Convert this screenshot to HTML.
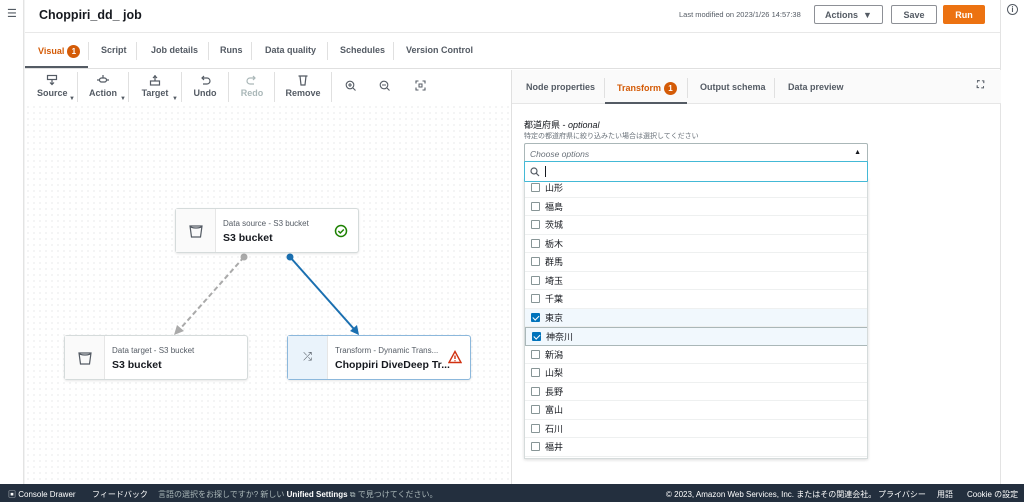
<!DOCTYPE html>
<html><head><meta charset="utf-8"><style>
*{box-sizing:border-box;margin:0;padding:0}
body{width:1024px;height:502px;overflow:hidden;position:relative;font-family:"Liberation Sans","Noto Sans CJK JP",sans-serif;background:#f2f3f3;color:#16191f}
.abs{position:absolute}
.lside{left:0;top:0;width:24px;height:484px;background:#fff;border-right:1px solid #e3e3e3}
.rside{left:1000px;top:0;width:24px;height:484px;background:#fff;border-left:1px solid #e3e3e3}
.main{left:25px;top:0;width:975px;height:484px;background:#fff}
.btn{position:absolute;top:5px;height:19px;border:1px solid #8d9096;border-radius:2px;font-size:9px;font-weight:bold;display:flex;align-items:center;justify-content:center;color:#545b64;background:#fff}
.tab{position:absolute;top:45px;font-size:9px;font-weight:bold;color:#545b64}
.sep{position:absolute;width:1px;background:#e0e0e0}
.badge{display:inline-block;width:13px;height:13px;border-radius:7px;background:#d45b07;color:#fff;font-size:8px;text-align:center;line-height:13px;vertical-align:middle;margin-left:3px}
.tool{position:absolute;top:74px;font-size:9px;font-weight:bold;color:#545b64;text-align:center}
.tool svg{display:block;margin:0 auto 2px}
.canvas{left:25px;top:104px;width:486px;height:380px;background-color:#fff;background-image:radial-gradient(#d9dcde 0.7px,transparent 0.8px);background-size:6px 6px}
.node{position:absolute;width:184px;height:45px;background:#fff;border:1px solid #d5dbdb;border-radius:3px;box-shadow:0 1px 2px rgba(0,0,0,.1)}
.node .ib{position:absolute;left:0;top:0;width:40px;height:43px;border-right:1px solid #e6e6e6;background:#fafafa;display:flex;align-items:center;justify-content:center}
.node .t1{position:absolute;left:47px;top:10px;font-size:8px;color:#545b64;white-space:nowrap}
.node .t2{position:absolute;left:47px;top:23px;font-size:10.5px;font-weight:bold;white-space:nowrap}
.rp{left:511px;top:70px;width:489px;height:414px;background:#fff;border-left:1px solid #e0e0e0}
.rtabs{position:absolute;left:0;top:0;width:489px;height:34px;background:#fafafa;border-bottom:1px solid #e6e6e6}
.rt{position:absolute;top:12px;font-size:9px;font-weight:bold;color:#545b64}
.row{position:absolute;left:0;width:344px;height:18.5px;border-bottom:1px solid #eef0f0;font-size:9px;color:#16191f}
.row .cb{position:absolute;left:6px;top:4px;width:9px;height:9px;border:1px solid #879596;border-radius:1px;background:#fff}
.row .cb.on{background:#0073bb;border-color:#0073bb}
.row .cb.on:after{content:"";position:absolute;left:2px;top:0px;width:2.5px;height:5px;border:solid #fff;border-width:0 1.3px 1.3px 0;transform:rotate(45deg)}
.row span{position:absolute;left:20px;top:2px}
.foot{left:0;top:484px;width:1024px;height:18px;background:#232f3e;color:#fff;font-size:8px}
.foot span{position:absolute;top:5px;white-space:nowrap}
</style></head><body>
<div class="abs lside"><div style="position:absolute;left:7px;top:7px;width:10px;font-size:11px;color:#545b64">☰</div></div>
<div class="abs rside"><div style="position:absolute;left:6px;top:4px;width:11px;height:11px;border:1px solid #545b64;border-radius:6px;font-size:8px;text-align:center;line-height:9px;color:#545b64;font-weight:bold">i</div></div>
<div class="abs main">
  <div style="position:absolute;left:14px;top:8px;font-size:12.5px;font-weight:bold">Choppiri_dd_ job</div>
  <div style="position:absolute;left:654px;top:10px;font-size:7.5px;color:#545b64">Last modified on 2023/1/26 14:57:38</div>
  <div class="btn" style="left:789px;width:69px">Actions&nbsp;&nbsp;▼</div>
  <div class="btn" style="left:866px;width:46px">Save</div>
  <div class="btn" style="left:918px;width:42px;background:#ec7211;border-color:#ec7211;color:#fff">Run</div>
  <div style="position:absolute;left:0;top:32px;width:975px;height:1px;background:#e8e8e8"></div>
  <div class="tab" style="left:13px;color:#d45b07">Visual<span class="badge">1</span></div>
  <div style="position:absolute;left:0;top:66px;width:63px;height:2px;background:#545b64"></div>
  <div class="sep" style="left:63px;top:42px;height:18px"></div>
  <div class="tab" style="left:76px">Script</div>
  <div class="sep" style="left:111px;top:42px;height:18px"></div>
  <div class="tab" style="left:126px">Job details</div>
  <div class="sep" style="left:183px;top:42px;height:18px"></div>
  <div class="tab" style="left:195px">Runs</div>
  <div class="sep" style="left:226px;top:42px;height:18px"></div>
  <div class="tab" style="left:240px">Data quality</div>
  <div class="sep" style="left:302px;top:42px;height:18px"></div>
  <div class="tab" style="left:315px">Schedules</div>
  <div class="sep" style="left:368px;top:42px;height:18px"></div>
  <div class="tab" style="left:381px">Version Control</div>
  <div style="position:absolute;left:0;top:68px;width:975px;height:1px;background:#e0e0e0"></div>
  <div class="tool" style="left:12px;width:30px"><svg width="12" height="12"><rect x="1.5" y="1.5" width="9" height="4" fill="none" stroke="#545b64" stroke-width="1.2"/><path d="M6 5.5v5M4 8.5l2 2 2-2" fill="none" stroke="#545b64" stroke-width="1.2"/></svg>Source<span style="font-size:6px;position:absolute;top:22px;left:32px">▼</span></div>
  <div class="sep" style="left:52px;top:72px;height:30px"></div>
  <div class="tool" style="left:63px;width:30px"><svg width="12" height="12"><rect x="2.5" y="4" width="7" height="4" rx="2" fill="none" stroke="#545b64" stroke-width="1.2"/><path d="M0 6h2.5M9.5 6H12M6 1v3" stroke="#545b64" stroke-width="1.2"/></svg>Action<span style="font-size:6px;position:absolute;top:22px;left:32px">▼</span></div>
  <div class="sep" style="left:103px;top:72px;height:30px"></div>
  <div class="tool" style="left:115px;width:30px"><svg width="12" height="12"><rect x="1.5" y="7" width="9" height="4" fill="none" stroke="#545b64" stroke-width="1.2"/><path d="M6 1v6M4 4l2-2 2 2" fill="none" stroke="#545b64" stroke-width="1.2"/></svg>Target<span style="font-size:6px;position:absolute;top:22px;left:32px">▼</span></div>
  <div class="sep" style="left:156px;top:72px;height:30px"></div>
  <div class="tool" style="left:165px;width:30px"><svg width="12" height="12"><path d="M3 4h5a3 3 0 0 1 0 6H4M5 2L3 4l2 2" fill="none" stroke="#545b64" stroke-width="1.2"/></svg>Undo</div>
  <div class="sep" style="left:203px;top:72px;height:30px"></div>
  <div class="tool" style="left:212px;width:30px;color:#aab7b8"><svg width="12" height="12"><path d="M9 4H4a3 3 0 0 0 0 6h4M7 2l2 2-2 2" fill="none" stroke="#aab7b8" stroke-width="1.2"/></svg>Redo</div>
  <div class="sep" style="left:249px;top:72px;height:30px"></div>
  <div class="tool" style="left:258px;width:40px"><svg width="12" height="12"><path d="M1.5 2h9M3 2l1 9h4l1-9" fill="none" stroke="#545b64" stroke-width="1.2"/></svg>Remove</div>
  <div class="sep" style="left:306px;top:72px;height:30px"></div>
  <div class="tool" style="left:318px;width:14px;top:80px"><svg width="11" height="11"><circle cx="5" cy="5" r="3.8" fill="none" stroke="#545b64" stroke-width="1.1"/><path d="M3 5h4M5 3v4M8 8l2.5 2.5" stroke="#545b64" stroke-width="1.1"/></svg></div>
  <div class="tool" style="left:352px;width:14px;top:80px"><svg width="11" height="11"><circle cx="5" cy="5" r="3.8" fill="none" stroke="#545b64" stroke-width="1.1"/><path d="M3 5h4M8 8l2.5 2.5" stroke="#545b64" stroke-width="1.1"/></svg></div>
  <div class="tool" style="left:388px;width:14px;top:80px"><svg width="11" height="11"><path d="M1 3.5V1h2.5M7.5 1H10v2.5M10 7.5V10H7.5M3.5 10H1V7.5" fill="none" stroke="#545b64" stroke-width="1.1"/><rect x="4" y="4" width="3" height="3" fill="none" stroke="#545b64" stroke-width="1"/></svg></div>
</div>
<div class="abs canvas"></div>
<svg class="abs" style="left:0;top:0" width="511" height="484">
  <line x1="244" y1="257" x2="180" y2="329" stroke="#aaa" stroke-width="2" stroke-dasharray="5,3"/>
  <polygon points="174,335 177,325 184,331" fill="#aaa"/>
  <circle cx="244" cy="257" r="3.5" fill="#aaa"/>
  <line x1="290" y1="257" x2="354" y2="329" stroke="#1a6fb0" stroke-width="2"/>
  <polygon points="359,335 350,331 357,325" fill="#1a6fb0"/>
  <circle cx="290" cy="257" r="3.5" fill="#1a6fb0"/>
</svg>
<div class="node" style="left:175px;top:208px"><div class="ib"><svg width="14" height="16"><path d="M1 3h12l-1.5 11h-9z M1 3a6 2 0 0 0 12 0" fill="none" stroke="#545b64" stroke-width="1.2"/></svg></div><div class="t1">Data source - S3 bucket</div><div class="t2">S3 bucket</div>
<svg style="position:absolute;left:158px;top:15px" width="14" height="14"><circle cx="7" cy="7" r="5.5" fill="none" stroke="#1d8102" stroke-width="1.5"/><path d="M4.3 7l2 2 3.5-3.5" fill="none" stroke="#1d8102" stroke-width="1.5"/></svg></div>
<div class="node" style="left:64px;top:335px"><div class="ib"><svg width="14" height="16"><path d="M1 3h12l-1.5 11h-9z M1 3a6 2 0 0 0 12 0" fill="none" stroke="#545b64" stroke-width="1.2"/></svg></div><div class="t1">Data target - S3 bucket</div><div class="t2">S3 bucket</div></div>
<div class="node" style="left:287px;top:335px;border-color:#8cb8dc"><div class="ib" style="background:#eaf3fb"><span style="font-size:11px;color:#545b64">⤮</span></div><div class="t1">Transform - Dynamic Trans...</div><div class="t2">Choppiri DiveDeep Tr...</div>
<svg style="position:absolute;left:160px;top:14px" width="14" height="14"><path d="M7 1.5L13 12.5H1z" fill="none" stroke="#d13212" stroke-width="1.4"/><path d="M7 5.5v3.5M7 10.3v1" stroke="#d13212" stroke-width="1.4"/></svg></div>
<div class="abs rp">
  <div class="rtabs">
    <div class="rt" style="left:14px">Node properties</div>
    <div class="sep" style="left:92px;top:8px;height:20px"></div>
    <div class="rt" style="left:105px;color:#d45b07">Transform<span class="badge">1</span></div>
    <div style="position:absolute;left:93px;top:32px;width:82px;height:2px;background:#545b64"></div>
    <div class="sep" style="left:175px;top:8px;height:20px"></div>
    <div class="rt" style="left:188px">Output schema</div>
    <div class="sep" style="left:262px;top:8px;height:20px"></div>
    <div class="rt" style="left:276px">Data preview</div>
    <div class="rt" style="left:465px;top:10px;font-size:10px">⛶</div>
  </div>
  <div style="position:absolute;left:12px;top:48px;font-size:9px">都道府県 - <i>optional</i></div>
  <div style="position:absolute;left:12px;top:61px;font-size:7px;color:#687078">特定の都道府県に絞り込みたい場合は選択してください</div>
  <div style="position:absolute;left:12px;top:73px;width:344px;height:20px;border:1px solid #aab7b8;border-radius:2px;font-size:8.5px;color:#687078;font-style:italic;padding:5px 5px">Choose options<span style="position:absolute;right:6px;top:5px;font-style:normal;font-size:7px;color:#16191f">▲</span></div>
  <div style="position:absolute;left:12px;top:108px;width:344px;height:281px;border:1px solid #d5dbdb;box-shadow:0 1px 3px rgba(0,0,0,.15);background:#fff;overflow:hidden">
    <div class="row" style="top:0"><div class="cb"></div><span>山形</span></div>
    <div class="row" style="top:18.5px"><div class="cb"></div><span>福島</span></div>
    <div class="row" style="top:37px"><div class="cb"></div><span>茨城</span></div>
    <div class="row" style="top:55.5px"><div class="cb"></div><span>栃木</span></div>
    <div class="row" style="top:74px"><div class="cb"></div><span>群馬</span></div>
    <div class="row" style="top:92.5px"><div class="cb"></div><span>埼玉</span></div>
    <div class="row" style="top:111px"><div class="cb"></div><span>千葉</span></div>
    <div class="row" style="top:129.5px;background:#f1f8fd"><div class="cb on"></div><span>東京</span></div>
    <div class="row" style="top:148px;background:#f1f8fd;border:1px solid #aab7b8"><div class="cb on"></div><span>神奈川</span></div>
    <div class="row" style="top:166.5px"><div class="cb"></div><span>新潟</span></div>
    <div class="row" style="top:185px"><div class="cb"></div><span>山梨</span></div>
    <div class="row" style="top:203.5px"><div class="cb"></div><span>長野</span></div>
    <div class="row" style="top:222px"><div class="cb"></div><span>富山</span></div>
    <div class="row" style="top:240.5px"><div class="cb"></div><span>石川</span></div>
    <div class="row" style="top:259px"><div class="cb"></div><span>福井</span></div>
  </div>
  <div style="position:absolute;left:12px;top:91px;width:344px;height:21px;border:1.5px solid #44b9d6;background:#fff;border-radius:1px">
    <svg style="position:absolute;left:5px;top:5px" width="10" height="10"><circle cx="4" cy="4" r="3" fill="none" stroke="#545b64" stroke-width="1.2"/><path d="M6.2 6.2L9 9" stroke="#545b64" stroke-width="1.2"/></svg>
    <div style="position:absolute;left:20px;top:4px;width:1px;height:11px;background:#16191f"></div>
  </div>
</div>
<div class="abs foot">
  <span style="left:8px">▣ Console Drawer</span>
  <span style="left:92px">フィードバック</span>
  <span style="left:158px;color:#aab7b8">言語の選択をお探しですか? 新しい <b style="color:#fff">Unified Settings</b> ⧉ で見つけてください。</span>
  <span style="left:666px">© 2023, Amazon Web Services, Inc. またはその関連会社。</span>
  <span style="left:878px">プライバシー</span>
  <span style="left:937px">用語</span>
  <span style="left:967px">Cookie の設定</span>
</div>
</body></html>
